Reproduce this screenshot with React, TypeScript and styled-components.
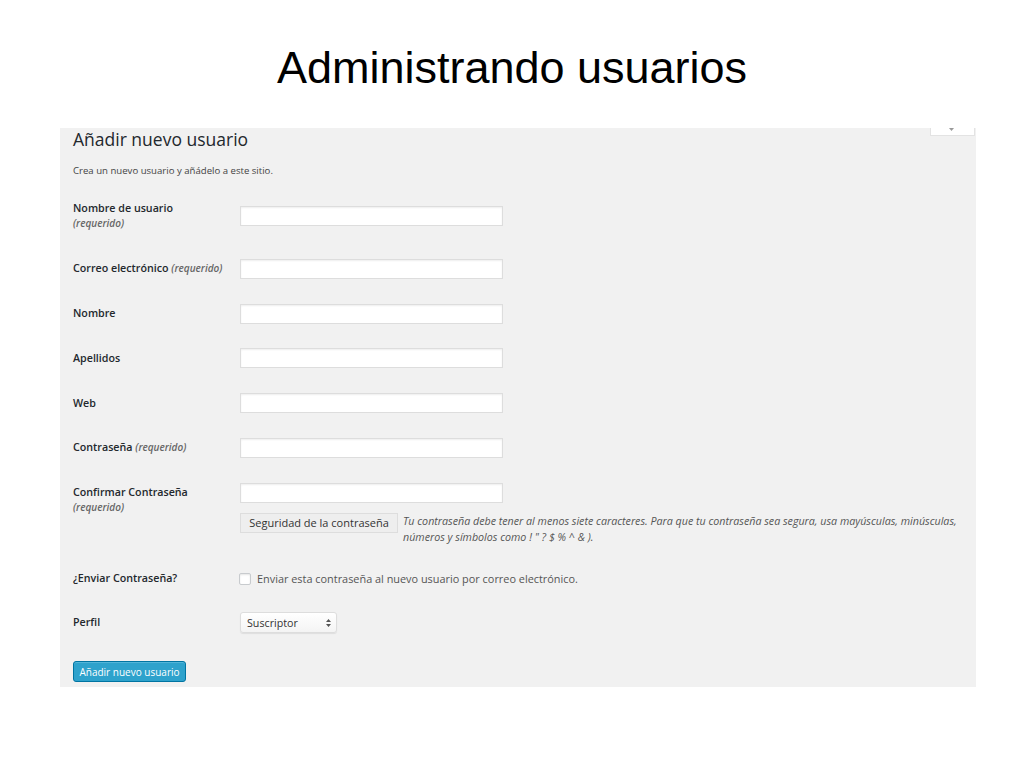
import React from 'react';
import styled, { createGlobalStyle } from 'styled-components';

const GlobalStyle = createGlobalStyle`
  html, body {
    margin: 0;
    padding: 0;
    background: #fff;
  }
`;

const Slide = styled.div`
  width: 1024px;
  height: 768px;
  display: flex;
  flex-direction: column;
`;

const Title = styled.h1`
  margin: 45px 0 0;
  font-family: "Liberation Sans", Arial, sans-serif;
  font-weight: 400;
  font-size: 45px;
  line-height: 45px;
  text-align: center;
  color: #000;
`;

const Panel = styled.section`
  margin: 38px 0 0 60px;
  width: 916px;
  height: 559px;
  box-sizing: border-box;
  padding-left: 13px;
  background: #f1f1f1;
  font-family: "Open Sans", "DejaVu Sans", sans-serif;
  color: #444;
  display: flex;
  flex-direction: column;
`;

const Header = styled.div`
  display: flex;
  justify-content: space-between;
  align-items: flex-start;
`;

const Heading = styled.h2`
  margin: 0;
  font-size: 17.5px;
  line-height: 23px;
  font-weight: 400;
  color: #23282d;
`;

const HelpTab = styled.div`
  width: 43px;
  height: 7px;
  margin-right: 1px;
  background: #fff;
  border: 1px solid #e3e3e3;
  border-top: none;
  display: flex;
  justify-content: center;
  align-items: flex-start;
  svg {
    margin-left: -2px;
  }
`;

const Intro = styled.p`
  margin: 11.5px 0 0;
  font-size: 9.6px;
  line-height: 15px;
  color: #444;
`;

const Form = styled.form`
  margin-top: 23.5px;
  display: flex;
  flex-direction: column;
  gap: 24.8px;
`;

const Row = styled.div<{ $top?: boolean; $space?: number }>`
  display: grid;
  grid-template-columns: 167px 1fr;
  align-items: ${p => (p.$top ? 'start' : 'center')};
  margin-bottom: ${p => p.$space ?? 0}px;
`;

const Label = styled.label<{ $top?: boolean }>`
  font-size: 10.7px;
  line-height: 15px;
  font-weight: 600;
  color: #23282d;
  padding-top: ${p => (p.$top ? '2px' : '0')};
`;

const Req = styled.span<{ $block?: boolean }>`
  display: ${p => (p.$block ? 'block' : 'inline')};
  font-size: 10px;
  font-style: italic;
  font-weight: 600;
  color: #666;
`;

const TextInput = styled.input`
  display: block;
  width: 263px;
  height: 20px;
  box-sizing: border-box;
  margin: 0;
  padding: 0 5px;
  border: 1px solid #ddd;
  background: #fff;
  box-shadow: inset 0 1px 2px rgba(0, 0, 0, 0.07);
  outline: none;
`;

const Stack = styled.div`
  display: flex;
  flex-direction: column;
  gap: 10px;
`;

const MeterRow = styled.div`
  display: flex;
  align-items: flex-start;
  gap: 5px;
`;

const Meter = styled.div`
  flex: none;
  width: 158px;
  height: 20px;
  box-sizing: border-box;
  border: 1px solid #ddd;
  background: #eee;
  color: #333;
  font-size: 11px;
  line-height: 18px;
  text-align: center;
`;

const Hint = styled.p`
  margin: 0;
  font-size: 10.7px;
  line-height: 16px;
  font-style: italic;
  color: #555;
`;

const CheckLine = styled.label`
  display: flex;
  align-items: center;
  gap: 6px;
  margin-left: -1px;
  font-size: 10.9px;
  line-height: 18px;
  color: #555;
`;

const Box = styled.span`
  width: 12px;
  height: 12px;
  box-sizing: border-box;
  border: 1px solid #c8cbce;
  border-radius: 2px;
  background: #fff;
  box-shadow: inset 0 1px 2px rgba(0, 0, 0, 0.1);
`;

const Select = styled.div`
  width: 97px;
  height: 21px;
  box-sizing: border-box;
  display: flex;
  align-items: center;
  justify-content: space-between;
  padding: 0 5px 0 6px;
  border: 1px solid #ddd;
  border-radius: 3px;
  background: linear-gradient(#fff, #f4f4f4);
  box-shadow: 0 1px 1px rgba(0, 0, 0, 0.08);
  font-size: 10.7px;
  color: #333;
`;

const Button = styled.button`
  align-self: flex-start;
  margin-top: 3px;
  width: 113px;
  height: 21px;
  padding: 0;
  border: 1px solid #0074a2;
  border-radius: 3px;
  background: #2ea2cc;
  box-shadow: inset 0 1px 0 rgba(120, 200, 230, 0.5);
  color: #fff;
  font-family: "Open Sans", "DejaVu Sans", sans-serif;
  font-size: 10px;
  cursor: pointer;
`;

const fields = [
  { label: 'Nombre', id: 'first_name' },
  { label: 'Apellidos', id: 'last_name' },
  { label: 'Web', id: 'url' },
];

export default function App() {
  return (
    <>
      <GlobalStyle />
      <Slide>
        <Title>Administrando usuarios</Title>
        <Panel>
          <Header>
            <Heading>Añadir nuevo usuario</Heading>
            <HelpTab>
              <svg width="5" height="4" viewBox="0 0 5 4">
                <path d="M0 0h5L2.5 3z" fill="#999" />
              </svg>
            </HelpTab>
          </Header>
          <Intro>Crea un nuevo usuario y añádelo a este sitio.</Intro>

          <Form onSubmit={e => e.preventDefault()}>
            <Row $space={3}>
              <Label>
                Nombre de usuario
                <Req $block>(requerido)</Req>
              </Label>
              <TextInput />
            </Row>
            <Row>
              <Label>
                Correo electrónico <Req>(requerido)</Req>
              </Label>
              <TextInput />
            </Row>
            {fields.map(f => (
              <Row key={f.id}>
                <Label>{f.label}</Label>
                <TextInput />
              </Row>
            ))}
            <Row>
              <Label>
                Contraseña <Req>(requerido)</Req>
              </Label>
              <TextInput type="password" />
            </Row>
            <Row $top>
              <Label $top>
                Confirmar Contraseña
                <Req $block>(requerido)</Req>
              </Label>
              <Stack>
                <TextInput type="password" />
                <MeterRow>
                  <Meter>Seguridad de la contraseña</Meter>
                  <Hint>
                    Tu contraseña debe tener al menos siete caracteres. Para que tu contraseña sea segura, usa mayúsculas, minúsculas,
                    <br />
                    números y símbolos como ! " ? $ % ^ &amp; ).
                  </Hint>
                </MeterRow>
              </Stack>
            </Row>
            <Row>
              <Label>¿Enviar Contraseña?</Label>
              <CheckLine>
                <Box />
                Enviar esta contraseña al nuevo usuario por correo electrónico.
              </CheckLine>
            </Row>
            <Row>
              <Label>Perfil</Label>
              <Select>
                <span>Suscriptor</span>
                <svg width="5" height="8" viewBox="0 0 5 8">
                  <path d="M2.5 0L5 3H0z M2.5 8L0 5h5z" fill="#555" />
                </svg>
              </Select>
            </Row>
            <Button type="submit">Añadir nuevo usuario</Button>
          </Form>
        </Panel>
      </Slide>
    </>
  );
}
